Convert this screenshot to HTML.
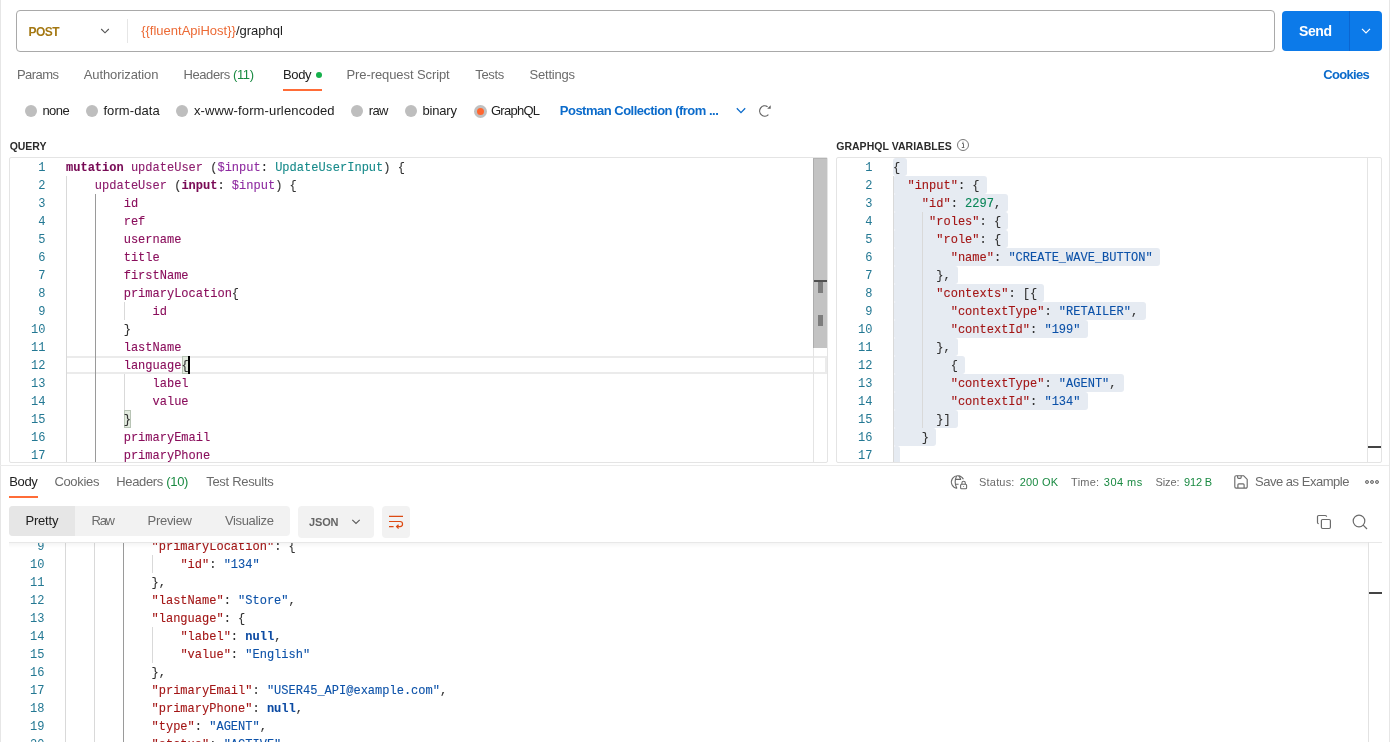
<!DOCTYPE html>
<html><head><meta charset="utf-8">
<style>
html,body{margin:0;padding:0;}
body{width:1394px;height:742px;position:relative;overflow:hidden;background:#ffffff;font-family:"Liberation Sans", sans-serif;}
.a{position:absolute;box-sizing:border-box;}
.clip{position:absolute;overflow:hidden;}
.inner{position:absolute;width:1394px;height:742px;}
.t{position:absolute;white-space:pre;}
.ln{position:absolute;width:40px;text-align:right;font-family:"Liberation Mono", monospace;font-size:12.03px;line-height:18px;color:#237893;white-space:pre;}
.cl{position:absolute;font-family:"Liberation Mono", monospace;font-size:12.03px;line-height:18px;color:#333333;white-space:pre;-webkit-text-stroke:0.1px currentColor;}
.g{position:absolute;width:1px;background:#d9d9d9;}
.ga{position:absolute;width:1px;background:#9a9a9a;}
.sel{position:absolute;height:18px;background:#e6ebf2;border-radius:3px;}
.kw{color:#770a55;font-weight:bold;}
.kwb{color:#7a0a55;font-weight:bold;}
.fn{color:#8c1b6c;}
.var{color:#8e2aa0;}
.ty{color:#168a8a;}
.fd{color:#8a0e5c;}
.p{color:#333333;}
.k{color:#a31515;}
.s{color:#0b51a8;}
.n{color:#098658;}
.nl{color:#0b4aa2;font-weight:bold;}
</style></head><body>
<div class="a" style="left:0;top:0;width:1394px;height:742px;will-change:transform;background:#ffffff;overflow:hidden">
<!-- page frame -->
<div class="a" style="left:0;top:0;width:1px;height:742px;background:#e6e6e6"></div>
<div class="a" style="left:1389px;top:0;width:1px;height:742px;background:#e6e6e6"></div>

<!-- URL bar -->
<div class="a" style="left:16px;top:10px;width:1259px;height:42px;border:1px solid #a9a9a9;border-radius:4px"></div>
<svg class="a" style="left:99px;top:26px" width="12" height="10" viewBox="0 0 12 10"><path d="M2.2 3 L6 6.8 L9.8 3" fill="none" stroke="#555555" stroke-width="1.1"/></svg>
<div class="a" style="left:127px;top:19px;width:1px;height:24px;background:#e6e6e6"></div>
<div class="t" style="left:141.2px;top:24.4px;font-size:13px;line-height:13px;color:#212121"><span style="color:#ec6a35">{{fluentApiHost}}</span>/graphql</div>
<div class="a" style="left:1282px;top:11px;width:100px;height:40px;background:#0c7ae9;border-radius:4px"></div>
<div class="a" style="left:1349px;top:11px;width:1px;height:40px;background:#0b66d2"></div>
<svg class="a" style="left:1360px;top:26px" width="12" height="10" viewBox="0 0 12 10"><path d="M2 2.9 L6 6.9 L10 2.9" fill="none" stroke="#ffffff" stroke-width="1.15"/></svg>

<!-- tabs -->
<div class="t" style="left:183.4px;top:68.0px;font-size:13px;line-height:13px;color:#6b6b6b;letter-spacing:-0.39px">Headers <span style="color:#1a8a42">(11)</span></div>
<div class="a" style="left:316px;top:72px;width:6px;height:6px;border-radius:50%;background:#16b04c"></div>
<div class="a" style="left:283px;top:89px;width:39px;height:2px;background:#ff6c37"></div>

<!-- radios -->
<div class="a" style="left:25px;top:104.9px;width:12px;height:12px;border-radius:50%;background:#bebebe"></div>
<div class="a" style="left:85.7px;top:104.9px;width:12px;height:12px;border-radius:50%;background:#bebebe"></div>
<div class="a" style="left:175.7px;top:104.9px;width:12px;height:12px;border-radius:50%;background:#bebebe"></div>
<div class="a" style="left:351px;top:104.9px;width:12px;height:12px;border-radius:50%;background:#bebebe"></div>
<div class="a" style="left:405px;top:104.9px;width:12px;height:12px;border-radius:50%;background:#bebebe"></div>
<div class="a" style="left:474px;top:104.8px;width:13px;height:13px;border-radius:50%;background:#c0c0c0"></div>
<div class="a" style="left:477px;top:107.8px;width:7px;height:7px;border-radius:50%;background:#ff6630"></div>
<svg class="a" style="left:735px;top:105px" width="12" height="10" viewBox="0 0 12 10"><path d="M1.8 3.3 L6 7.6 L10.2 3.3" fill="none" stroke="#0b6bcb" stroke-width="1.3"/></svg>
<svg class="a" style="left:757px;top:104px" width="15" height="14" viewBox="0 0 15 14"><path d="M10.58 2.72 A5.1 5.1 0 1 0 11.41 10.61" fill="none" stroke="#606060" stroke-width="1.25"/><path d="M10.2 4.7 L13.7 4.7 L13.7 1.2 Z" fill="#606060"/></svg>

<!-- info icon -->
<svg class="a" style="left:956px;top:138px" width="14" height="14" viewBox="0 0 14 14"><circle cx="7" cy="7" r="5.5" fill="none" stroke="#7a7a7a" stroke-width="1"/><path d="M6 5.6 H7.5 V9.2 M5.8 9.5 H8.3" fill="none" stroke="#6b6b6b" stroke-width="1"/><rect x="6.5" y="3.7" width="1" height="1" fill="#6b6b6b"/></svg>

<!-- query editor -->
<div class="a" style="left:9px;top:157px;width:819px;height:306px;border:1px solid #e4e4e4;border-radius:2px"></div>
<div class="a" style="left:67px;top:356px;width:760px;height:18px;border:2px solid #ebebeb;border-left:none"></div>
<div class="clip" style="left:10px;top:158px;width:803px;height:304px"><div class="inner" style="left:-10px;top:-158px">
<div class="g" style="left:66.2px;top:176px;height:288px"></div>
<div class="ga" style="left:95.1px;top:194px;height:270px"></div>
<div class="g" style="left:124.0px;top:302px;height:18px"></div>
<div class="g" style="left:124.0px;top:374px;height:36px"></div>
<div class="a" style="left:181.5px;top:356px;width:7.6px;height:18px;background:#e3ebdf;border:1px solid #b8c4b5"></div>
<div class="a" style="left:123.6px;top:410px;width:7.6px;height:18px;background:#e3ebdf;border:1px solid #b8c4b5"></div>
<div class="ln" style="top:159px;left:5.5px">1</div>
<div class="cl" style="top:159px;left:66px"><span class="kw">mutation</span><span class="p"> </span><span class="fn">updateUser</span><span class="p"> (</span><span class="var">$input</span><span class="p">: </span><span class="ty">UpdateUserInput</span><span class="p">) {</span></div>
<div class="ln" style="top:177px;left:5.5px">2</div>
<div class="cl" style="top:177px;left:66px"><span class="p">    </span><span class="fn">updateUser</span><span class="p"> (</span><span class="kwb">input</span><span class="p">: </span><span class="var">$input</span><span class="p">) {</span></div>
<div class="ln" style="top:195px;left:5.5px">3</div>
<div class="cl" style="top:195px;left:66px"><span class="p">        </span><span class="fd">id</span></div>
<div class="ln" style="top:213px;left:5.5px">4</div>
<div class="cl" style="top:213px;left:66px"><span class="p">        </span><span class="fd">ref</span></div>
<div class="ln" style="top:231px;left:5.5px">5</div>
<div class="cl" style="top:231px;left:66px"><span class="p">        </span><span class="fd">username</span></div>
<div class="ln" style="top:249px;left:5.5px">6</div>
<div class="cl" style="top:249px;left:66px"><span class="p">        </span><span class="fd">title</span></div>
<div class="ln" style="top:267px;left:5.5px">7</div>
<div class="cl" style="top:267px;left:66px"><span class="p">        </span><span class="fd">firstName</span></div>
<div class="ln" style="top:285px;left:5.5px">8</div>
<div class="cl" style="top:285px;left:66px"><span class="p">        </span><span class="fd">primaryLocation</span><span class="p">{</span></div>
<div class="ln" style="top:303px;left:5.5px">9</div>
<div class="cl" style="top:303px;left:66px"><span class="p">            </span><span class="fd">id</span></div>
<div class="ln" style="top:321px;left:5.5px">10</div>
<div class="cl" style="top:321px;left:66px"><span class="p">        }</span></div>
<div class="ln" style="top:339px;left:5.5px">11</div>
<div class="cl" style="top:339px;left:66px"><span class="p">        </span><span class="fd">lastName</span></div>
<div class="ln" style="top:357px;left:5.5px">12</div>
<div class="cl" style="top:357px;left:66px"><span class="p">        </span><span class="fd">language</span><span class="p">{</span></div>
<div class="ln" style="top:375px;left:5.5px">13</div>
<div class="cl" style="top:375px;left:66px"><span class="p">            </span><span class="fd">label</span></div>
<div class="ln" style="top:393px;left:5.5px">14</div>
<div class="cl" style="top:393px;left:66px"><span class="p">            </span><span class="fd">value</span></div>
<div class="ln" style="top:411px;left:5.5px">15</div>
<div class="cl" style="top:411px;left:66px"><span class="p">        }</span></div>
<div class="ln" style="top:429px;left:5.5px">16</div>
<div class="cl" style="top:429px;left:66px"><span class="p">        </span><span class="fd">primaryEmail</span></div>
<div class="ln" style="top:447px;left:5.5px">17</div>
<div class="cl" style="top:447px;left:66px"><span class="p">        </span><span class="fd">primaryPhone</span></div>
</div></div>
<div class="a" style="left:188.3px;top:356px;width:2px;height:18px;background:#000"></div>
<div class="a" style="left:813px;top:158px;width:1px;height:304px;background:#e4e4e4"></div>
<div class="a" style="left:813px;top:158px;width:14px;height:190px;background:#c3c3c3;border-left:1px solid #adadad;border-top:1px solid #b4b4b4"></div>
<div class="a" style="left:814px;top:280px;width:12.6px;height:2px;background:#505050"></div>
<div class="a" style="left:818px;top:282px;width:5px;height:10.5px;background:#7d7d7d"></div>
<div class="a" style="left:818px;top:315px;width:5px;height:11px;background:#7d7d7d"></div>

<!-- variables editor -->
<div class="a" style="left:836px;top:157px;width:546px;height:306px;border:1px solid #e4e4e4;border-radius:2px"></div>
<div class="clip" style="left:837px;top:158px;width:530px;height:304px"><div class="inner" style="left:-837px;top:-158px">
<div class="sel" style="left:893px;top:158px;width:14.2px"></div>
<div class="sel" style="left:893px;top:176px;width:93.6px"></div>
<div class="sel" style="left:893px;top:194px;width:115.3px"></div>
<div class="sel" style="left:893px;top:212px;width:115.3px"></div>
<div class="sel" style="left:893px;top:230px;width:115.3px"></div>
<div class="sel" style="left:893px;top:248px;width:266.9px"></div>
<div class="sel" style="left:893px;top:266px;width:64.8px"></div>
<div class="sel" style="left:893px;top:284px;width:151.4px"></div>
<div class="sel" style="left:893px;top:302px;width:252.5px"></div>
<div class="sel" style="left:893px;top:320px;width:194.7px"></div>
<div class="sel" style="left:893px;top:338px;width:64.8px"></div>
<div class="sel" style="left:893px;top:356px;width:72.0px"></div>
<div class="sel" style="left:893px;top:374px;width:230.8px"></div>
<div class="sel" style="left:893px;top:392px;width:194.7px"></div>
<div class="sel" style="left:893px;top:410px;width:64.8px"></div>
<div class="sel" style="left:893px;top:428px;width:43.1px"></div>
<div class="sel" style="left:893px;top:446px;width:7.0px"></div>
<div class="g" style="left:893.2px;top:176px;height:288px"></div>
<div class="g" style="left:922.1px;top:212px;height:216px"></div>
<div class="ln" style="top:159px;left:832.5px">1</div>
<div class="cl" style="top:159px;left:893px"><span class="p">{</span></div>
<div class="ln" style="top:177px;left:832.5px">2</div>
<div class="cl" style="top:177px;left:893px"><span class="p">  </span><span class="k">&quot;input&quot;</span><span class="p">: {</span></div>
<div class="ln" style="top:195px;left:832.5px">3</div>
<div class="cl" style="top:195px;left:893px"><span class="p">    </span><span class="k">&quot;id&quot;</span><span class="p">: </span><span class="n">2297</span><span class="p">,</span></div>
<div class="ln" style="top:213px;left:832.5px">4</div>
<div class="cl" style="top:213px;left:893px"><span class="p">     </span><span class="k">&quot;roles&quot;</span><span class="p">: {</span></div>
<div class="ln" style="top:231px;left:832.5px">5</div>
<div class="cl" style="top:231px;left:893px"><span class="p">      </span><span class="k">&quot;role&quot;</span><span class="p">: {</span></div>
<div class="ln" style="top:249px;left:832.5px">6</div>
<div class="cl" style="top:249px;left:893px"><span class="p">        </span><span class="k">&quot;name&quot;</span><span class="p">: </span><span class="s">&quot;CREATE_WAVE_BUTTON&quot;</span></div>
<div class="ln" style="top:267px;left:832.5px">7</div>
<div class="cl" style="top:267px;left:893px"><span class="p">      },</span></div>
<div class="ln" style="top:285px;left:832.5px">8</div>
<div class="cl" style="top:285px;left:893px"><span class="p">      </span><span class="k">&quot;contexts&quot;</span><span class="p">: [{</span></div>
<div class="ln" style="top:303px;left:832.5px">9</div>
<div class="cl" style="top:303px;left:893px"><span class="p">        </span><span class="k">&quot;contextType&quot;</span><span class="p">: </span><span class="s">&quot;RETAILER&quot;</span><span class="p">,</span></div>
<div class="ln" style="top:321px;left:832.5px">10</div>
<div class="cl" style="top:321px;left:893px"><span class="p">        </span><span class="k">&quot;contextId&quot;</span><span class="p">: </span><span class="s">&quot;199&quot;</span></div>
<div class="ln" style="top:339px;left:832.5px">11</div>
<div class="cl" style="top:339px;left:893px"><span class="p">      },</span></div>
<div class="ln" style="top:357px;left:832.5px">12</div>
<div class="cl" style="top:357px;left:893px"><span class="p">        {</span></div>
<div class="ln" style="top:375px;left:832.5px">13</div>
<div class="cl" style="top:375px;left:893px"><span class="p">        </span><span class="k">&quot;contextType&quot;</span><span class="p">: </span><span class="s">&quot;AGENT&quot;</span><span class="p">,</span></div>
<div class="ln" style="top:393px;left:832.5px">14</div>
<div class="cl" style="top:393px;left:893px"><span class="p">        </span><span class="k">&quot;contextId&quot;</span><span class="p">: </span><span class="s">&quot;134&quot;</span></div>
<div class="ln" style="top:411px;left:832.5px">15</div>
<div class="cl" style="top:411px;left:893px"><span class="p">      }]</span></div>
<div class="ln" style="top:429px;left:832.5px">16</div>
<div class="cl" style="top:429px;left:893px"><span class="p">    }</span></div>
<div class="ln" style="top:447px;left:832.5px">17</div>
</div></div>
<div class="a" style="left:1367px;top:158px;width:1px;height:304px;background:#e4e4e4"></div>
<div class="a" style="left:1368px;top:446px;width:13px;height:2px;background:#444444"></div>

<!-- divider -->
<div class="a" style="left:0;top:465px;width:1389px;height:1px;background:#ebebeb"></div>

<!-- response tabs -->
<div class="t" style="left:116.2px;top:475.3px;font-size:13px;line-height:13px;color:#6b6b6b;letter-spacing:-0.33px">Headers <span style="color:#1a8a42">(10)</span></div>
<div class="a" style="left:9px;top:496px;width:29px;height:2px;background:#ff6c37"></div>
<svg class="a" style="left:946px;top:470px" width="26" height="24" viewBox="0 0 26 24"><path d="M17.41 9.34 A6.3 6.3 0 1 0 11.15 18.28" fill="none" stroke="#6b6b6b" stroke-width="1.1"/><path d="M10.6 5.9 Q7.6 12 10.8 18.2 M12.8 5.9 Q14.3 7.6 14.7 10 M9 9.4 H14.6 M9 14.2 H12.6" fill="none" stroke="#6b6b6b" stroke-width="1.1"/><rect x="14.6" y="14.3" width="6" height="4.4" rx="1" fill="none" stroke="#6b6b6b" stroke-width="1.1"/><path d="M15.9 14.3 V12.9 A1.7 1.7 0 0 1 19.3 12.9 V14.3" fill="none" stroke="#6b6b6b" stroke-width="1.1"/><circle cx="17.6" cy="16.5" r="0.5" fill="#6b6b6b"/></svg>
<svg class="a" style="left:1228px;top:470px" width="26" height="24" viewBox="0 0 26 24"><path d="M8.1 5.7 H15.5 L19.2 9.4 V16.8 A1.3 1.3 0 0 1 17.9 18.1 H8.1 A1.3 1.3 0 0 1 6.8 16.8 V7 A1.3 1.3 0 0 1 8.1 5.7 Z" fill="none" stroke="#6b6b6b" stroke-width="1.15" stroke-linejoin="round"/><path d="M9.6 5.7 V7.3 A1 1 0 0 0 10.6 8.3 H12.2 A1 1 0 0 0 13.2 7.3 V5.7 M9.9 18.1 V14.8 A1 1 0 0 1 10.9 13.8 H15.1 A1 1 0 0 1 16.1 14.8 V18.1" fill="none" stroke="#6b6b6b" stroke-width="1.15"/></svg>
<div class="a" style="left:1365.2px;top:480.2px;width:3.8px;height:3.8px;border-radius:50%;background:#bdbdbd;border:1px solid #6b6b6b"></div>
<div class="a" style="left:1370.2px;top:480.2px;width:3.8px;height:3.8px;border-radius:50%;background:#bdbdbd;border:1px solid #6b6b6b"></div>
<div class="a" style="left:1375.2px;top:480.2px;width:3.8px;height:3.8px;border-radius:50%;background:#bdbdbd;border:1px solid #6b6b6b"></div>

<!-- segmented control -->
<div class="a" style="left:9px;top:506px;width:281px;height:30px;background:#f2f2f2;border-radius:4px"></div>
<div class="a" style="left:9px;top:506px;width:66px;height:30px;background:#e6e6e6;border-radius:4px 0 0 4px"></div>
<div class="a" style="left:298px;top:506px;width:76px;height:31.5px;background:#f2f2f2;border-radius:4px"></div>
<svg class="a" style="left:350px;top:516px" width="12" height="10" viewBox="0 0 12 10"><path d="M2.3 3.8 L6 7.5 L9.7 3.8" fill="none" stroke="#5a5a5a" stroke-width="1.1"/></svg>
<div class="a" style="left:382px;top:506px;width:28px;height:31.5px;background:#f2f2f2;border-radius:4px"></div>
<svg class="a" style="left:387px;top:514px" width="18" height="16" viewBox="0 0 18 16"><path d="M2 2.4 H16 M2 7.5 H13 A2.55 2.55 0 0 1 13 12.6 H9.8 M2 12.6 H6.6" fill="none" stroke="#dc4a12" stroke-width="1.2"/><path d="M11.6 10.7 L9.6 12.6 L11.6 14.5" fill="none" stroke="#dc4a12" stroke-width="1.2"/></svg>
<svg class="a" style="left:1316px;top:514px" width="16" height="16" viewBox="0 0 16 16"><path d="M2.7 9.7 A1.2 1.2 0 0 1 1.5 8.5 V2.7 A1.2 1.2 0 0 1 2.7 1.5 H9.4 A1.2 1.2 0 0 1 10.6 2.7" fill="none" stroke="#6b6b6b" stroke-width="1.2"/><rect x="5.4" y="5.5" width="9" height="9" rx="1.2" fill="none" stroke="#6b6b6b" stroke-width="1.2"/></svg>
<svg class="a" style="left:1351px;top:513px" width="18" height="18" viewBox="0 0 18 18"><circle cx="8" cy="8" r="5.8" fill="none" stroke="#6b6b6b" stroke-width="1.2"/><path d="M12.2 12.2 L16 16" stroke="#6b6b6b" stroke-width="1.2"/></svg>

<!-- response editor -->
<div class="clip" style="left:9px;top:543px;width:1359px;height:199px"><div class="inner" style="left:-9px;top:-543px">
<div class="g" style="left:65.2px;top:537px;height:216px"></div>
<div class="g" style="left:94.1px;top:537px;height:216px"></div>
<div class="ga" style="left:123.0px;top:537px;height:216px"></div>
<div class="g" style="left:151.8px;top:555px;height:18px"></div>
<div class="g" style="left:151.8px;top:627px;height:36px"></div>
<div class="ln" style="top:538px;left:4.5px">9</div>
<div class="cl" style="top:538px;left:65px"><span class="p">            </span><span class="k">&quot;primaryLocation&quot;</span><span class="p">: {</span></div>
<div class="ln" style="top:556px;left:4.5px">10</div>
<div class="cl" style="top:556px;left:65px"><span class="p">                </span><span class="k">&quot;id&quot;</span><span class="p">: </span><span class="s">&quot;134&quot;</span></div>
<div class="ln" style="top:574px;left:4.5px">11</div>
<div class="cl" style="top:574px;left:65px"><span class="p">            },</span></div>
<div class="ln" style="top:592px;left:4.5px">12</div>
<div class="cl" style="top:592px;left:65px"><span class="p">            </span><span class="k">&quot;lastName&quot;</span><span class="p">: </span><span class="s">&quot;Store&quot;</span><span class="p">,</span></div>
<div class="ln" style="top:610px;left:4.5px">13</div>
<div class="cl" style="top:610px;left:65px"><span class="p">            </span><span class="k">&quot;language&quot;</span><span class="p">: {</span></div>
<div class="ln" style="top:628px;left:4.5px">14</div>
<div class="cl" style="top:628px;left:65px"><span class="p">                </span><span class="k">&quot;label&quot;</span><span class="p">: </span><span class="nl">null</span><span class="p">,</span></div>
<div class="ln" style="top:646px;left:4.5px">15</div>
<div class="cl" style="top:646px;left:65px"><span class="p">                </span><span class="k">&quot;value&quot;</span><span class="p">: </span><span class="s">&quot;English&quot;</span></div>
<div class="ln" style="top:664px;left:4.5px">16</div>
<div class="cl" style="top:664px;left:65px"><span class="p">            },</span></div>
<div class="ln" style="top:682px;left:4.5px">17</div>
<div class="cl" style="top:682px;left:65px"><span class="p">            </span><span class="k">&quot;primaryEmail&quot;</span><span class="p">: </span><span class="s">&quot;USER45_API@example.com&quot;</span><span class="p">,</span></div>
<div class="ln" style="top:700px;left:4.5px">18</div>
<div class="cl" style="top:700px;left:65px"><span class="p">            </span><span class="k">&quot;primaryPhone&quot;</span><span class="p">: </span><span class="nl">null</span><span class="p">,</span></div>
<div class="ln" style="top:718px;left:4.5px">19</div>
<div class="cl" style="top:718px;left:65px"><span class="p">            </span><span class="k">&quot;type&quot;</span><span class="p">: </span><span class="s">&quot;AGENT&quot;</span><span class="p">,</span></div>
<div class="ln" style="top:736px;left:4.5px">20</div>
<div class="cl" style="top:736px;left:65px"><span class="p">            </span><span class="k">&quot;status&quot;</span><span class="p">: </span><span class="s">&quot;ACTIVE&quot;</span><span class="p">,</span></div>
</div></div>
<div class="a" style="left:9px;top:542px;width:1373px;height:1px;background:#e8e8e8"></div>
<div class="a" style="left:9px;top:543px;width:1359px;height:5px;background:linear-gradient(rgba(0,0,0,0.04),rgba(0,0,0,0))"></div>
<div class="a" style="left:1368px;top:542px;width:1px;height:200px;background:#e2e2e2"></div>
<div class="a" style="left:1369px;top:592px;width:13px;height:2px;background:#444444"></div>

<!-- texts -->
<div class="t" style="left:28.5px;top:26.44px;font-size:12px;line-height:12px;font-weight:bold;color:#a47812;letter-spacing:-0.557px;">POST</div>
<div class="t" style="left:1299.0px;top:24.35px;font-size:14px;line-height:14px;font-weight:bold;color:#ffffff;letter-spacing:-0.409px;">Send</div>
<div class="t" style="left:17.0px;top:68.00px;font-size:13px;line-height:13px;font-weight:normal;color:#6b6b6b;letter-spacing:-0.558px;">Params</div>
<div class="t" style="left:83.7px;top:68.00px;font-size:13px;line-height:13px;font-weight:normal;color:#6b6b6b;letter-spacing:-0.090px;">Authorization</div>
<div class="t" style="left:283.0px;top:68.00px;font-size:13px;line-height:13px;font-weight:normal;color:#212121;letter-spacing:-0.377px;">Body</div>
<div class="t" style="left:346.5px;top:68.00px;font-size:13px;line-height:13px;font-weight:normal;color:#6b6b6b;letter-spacing:-0.092px;">Pre-request Script</div>
<div class="t" style="left:475.3px;top:68.00px;font-size:13px;line-height:13px;font-weight:normal;color:#6b6b6b;letter-spacing:-0.335px;">Tests</div>
<div class="t" style="left:529.5px;top:68.00px;font-size:13px;line-height:13px;font-weight:normal;color:#6b6b6b;letter-spacing:-0.210px;">Settings</div>
<div class="t" style="left:1323.2px;top:67.90px;font-size:13px;line-height:13px;font-weight:bold;color:#0b6bcb;letter-spacing:-0.679px;">Cookies</div>
<div class="t" style="left:42.4px;top:104.00px;font-size:13px;line-height:13px;font-weight:normal;color:#212121;letter-spacing:-0.507px;">none</div>
<div class="t" style="left:103.4px;top:104.00px;font-size:13px;line-height:13px;font-weight:normal;color:#212121;letter-spacing:0.096px;">form-data</div>
<div class="t" style="left:193.9px;top:104.00px;font-size:13px;line-height:13px;font-weight:normal;color:#212121;letter-spacing:0.136px;">x-www-form-urlencoded</div>
<div class="t" style="left:368.7px;top:104.00px;font-size:13px;line-height:13px;font-weight:normal;color:#212121;letter-spacing:-0.574px;">raw</div>
<div class="t" style="left:422.6px;top:104.00px;font-size:13px;line-height:13px;font-weight:normal;color:#212121;letter-spacing:-0.221px;">binary</div>
<div class="t" style="left:491.0px;top:104.00px;font-size:13px;line-height:13px;font-weight:normal;color:#212121;letter-spacing:-0.745px;">GraphQL</div>
<div class="t" style="left:559.8px;top:103.80px;font-size:13px;line-height:13px;font-weight:bold;color:#0b6bcb;letter-spacing:-0.505px;">Postman Collection (from ...</div>
<div class="t" style="left:9.7px;top:141.11px;font-size:10.5px;line-height:10.5px;font-weight:bold;color:#2b2b2b;letter-spacing:-0.062px;">QUERY</div>
<div class="t" style="left:836.2px;top:141.11px;font-size:10.5px;line-height:10.5px;font-weight:bold;color:#2b2b2b;letter-spacing:0.031px;">GRAPHQL VARIABLES</div>
<div class="t" style="left:9.3px;top:475.30px;font-size:13px;line-height:13px;font-weight:normal;color:#212121;letter-spacing:-0.410px;">Body</div>
<div class="t" style="left:54.4px;top:475.30px;font-size:13px;line-height:13px;font-weight:normal;color:#6b6b6b;letter-spacing:-0.328px;">Cookies</div>
<div class="t" style="left:206.2px;top:475.30px;font-size:13px;line-height:13px;font-weight:normal;color:#6b6b6b;letter-spacing:-0.300px;">Test Results</div>
<div class="t" style="left:979.1px;top:476.89px;font-size:11px;line-height:11px;font-weight:normal;color:#6b6b6b;letter-spacing:0.177px;">Status:</div>
<div class="t" style="left:1019.7px;top:476.89px;font-size:11px;line-height:11px;font-weight:normal;color:#1a8a42;letter-spacing:0.220px;">200 OK</div>
<div class="t" style="left:1071.1px;top:476.89px;font-size:11px;line-height:11px;font-weight:normal;color:#6b6b6b;letter-spacing:0.227px;">Time:</div>
<div class="t" style="left:1103.8px;top:476.89px;font-size:11px;line-height:11px;font-weight:normal;color:#1a8a42;letter-spacing:0.466px;">304 ms</div>
<div class="t" style="left:1155.5px;top:476.89px;font-size:11px;line-height:11px;font-weight:normal;color:#6b6b6b;letter-spacing:-0.114px;">Size:</div>
<div class="t" style="left:1184.0px;top:476.89px;font-size:11px;line-height:11px;font-weight:normal;color:#1a8a42;letter-spacing:-0.137px;">912 B</div>
<div class="t" style="left:1255.0px;top:475.20px;font-size:13px;line-height:13px;font-weight:normal;color:#6b6b6b;letter-spacing:-0.476px;">Save as Example</div>
<div class="t" style="left:25.4px;top:514.00px;font-size:13px;line-height:13px;font-weight:normal;color:#212121;letter-spacing:-0.171px;">Pretty</div>
<div class="t" style="left:91.5px;top:514.00px;font-size:13px;line-height:13px;font-weight:normal;color:#6b6b6b;letter-spacing:-1.253px;">Raw</div>
<div class="t" style="left:147.6px;top:514.00px;font-size:13px;line-height:13px;font-weight:normal;color:#6b6b6b;letter-spacing:-0.306px;">Preview</div>
<div class="t" style="left:224.9px;top:514.00px;font-size:13px;line-height:13px;font-weight:normal;color:#6b6b6b;letter-spacing:-0.336px;">Visualize</div>
<div class="t" style="left:309.0px;top:516.89px;font-size:11px;line-height:11px;font-weight:bold;color:#646464;letter-spacing:-0.152px;">JSON</div>
</div>
</body></html>
